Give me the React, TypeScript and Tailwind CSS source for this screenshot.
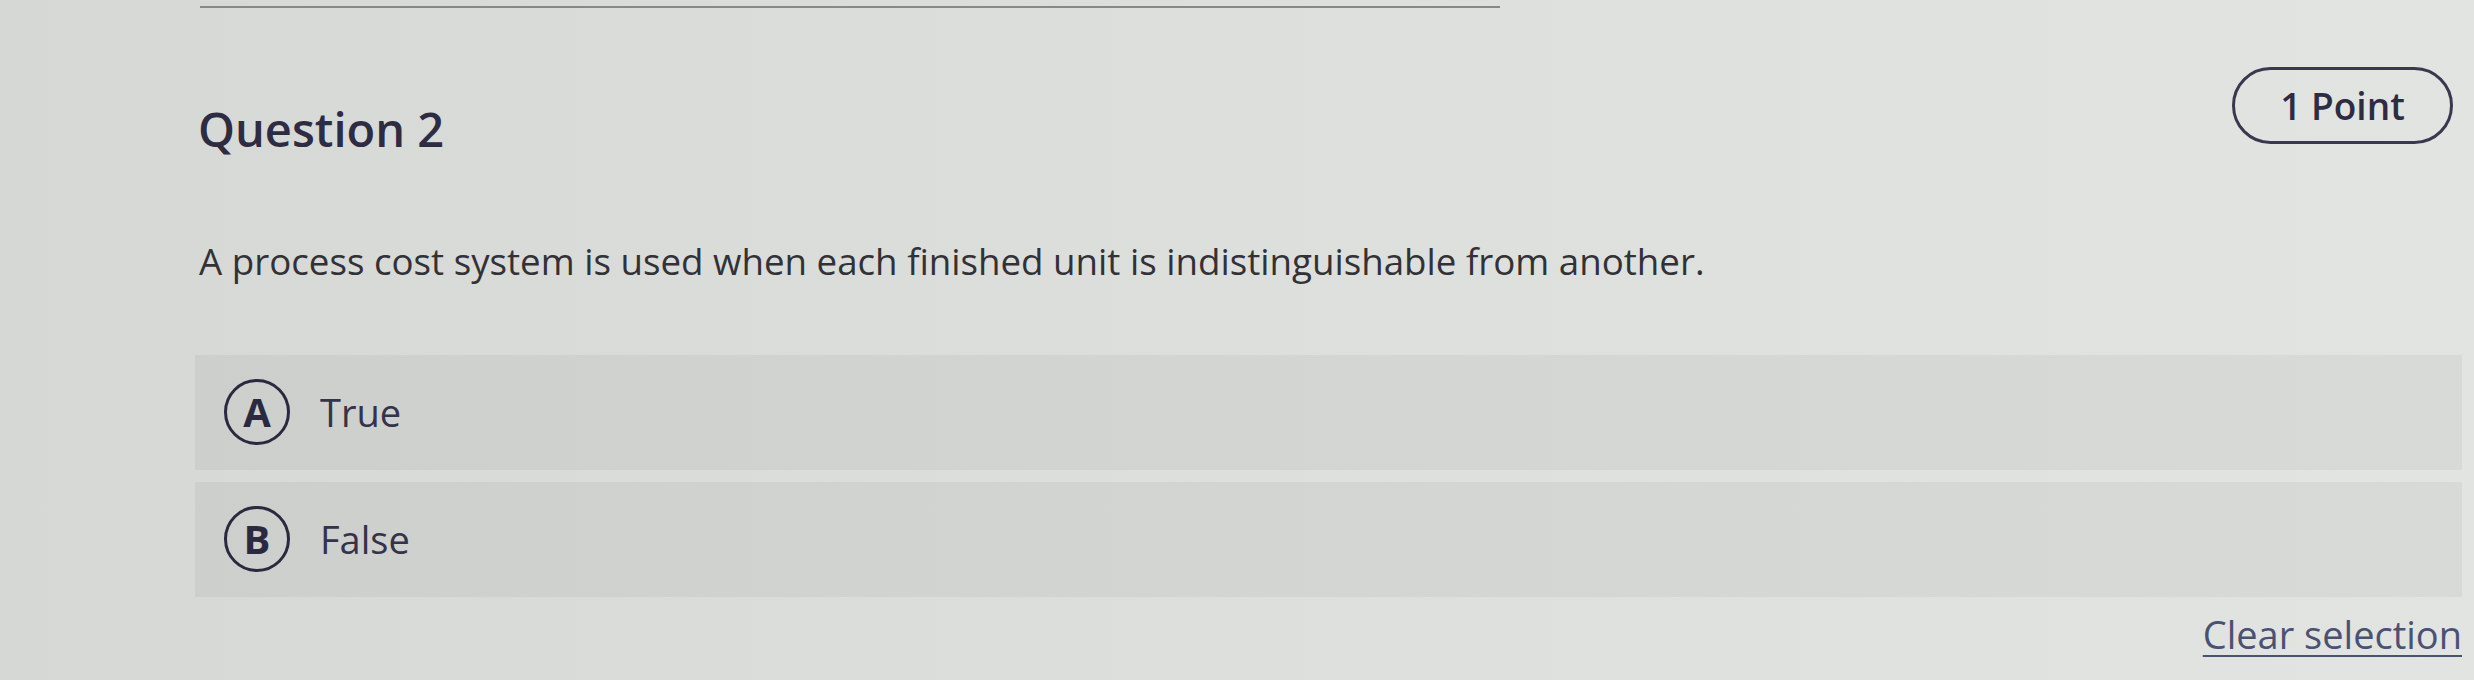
import React from "react";

type Choice = { key: string; label: string };

const choices: Choice[] = [
  { key: "A", label: "True" },
  { key: "B", label: "False" },
];

function ChoiceRow({ choice }: { choice: Choice }) {
  return (
    <div className="flex h-[115px] items-center gap-[30px] bg-black/[0.045] pl-[29px]">
      <div className="flex h-[66px] w-[66px] items-center justify-center rounded-full border-[3px] border-[#2b2940]">
        <span className="text-[40px] font-bold leading-none text-[#2b2940]">{choice.key}</span>
      </div>
      <span className="text-[38px] leading-none text-[#34334a]">{choice.label}</span>
    </div>
  );
}

export default function App() {
  return (
    <div
      className="h-[680px] w-full overflow-hidden bg-gradient-to-r from-[#d6d8d5] via-[#dddfdc] to-[#e2e4e1]"
      style={{ fontFamily: '"Open Sans", "Liberation Sans", sans-serif' }}
    >
      {/* divider from the previous question */}
      <div className="ml-[200px] mt-[6px] h-[2px] w-[1300px] bg-[#86888a]" />

      <div className="ml-[195px] w-[2267px]">
        {/* header */}
        <div className="mt-[59px] flex items-start justify-between">
          <h2 className="mt-[39px] pl-[3px] text-[47px] font-semibold leading-none text-[#2e2c42]">
            Question 2
          </h2>
          <div className="mr-[9px] flex h-[77px] w-[221px] items-center justify-center rounded-full border-[3px] border-[#3a384e]">
            <span className="text-[37px] font-semibold leading-none text-[#2e2c42]">1 Point</span>
          </div>
        </div>

        <p className="mt-[90px] pl-[4px] text-[36.7px] leading-none text-[#323236]">
          A process cost system is used when each finished unit is indistinguishable from another.
        </p>

        <div className="mt-[75px] flex flex-col gap-[12px]">
          {choices.map((c) => (
            <ChoiceRow key={c.key} choice={c} />
          ))}
        </div>

        <div className="mt-[18px] flex justify-end">
          <a className="text-[38px] leading-none text-[#4a5272] underline decoration-2 underline-offset-[6px]">
            Clear selection
          </a>
        </div>
      </div>
    </div>
  );
}
